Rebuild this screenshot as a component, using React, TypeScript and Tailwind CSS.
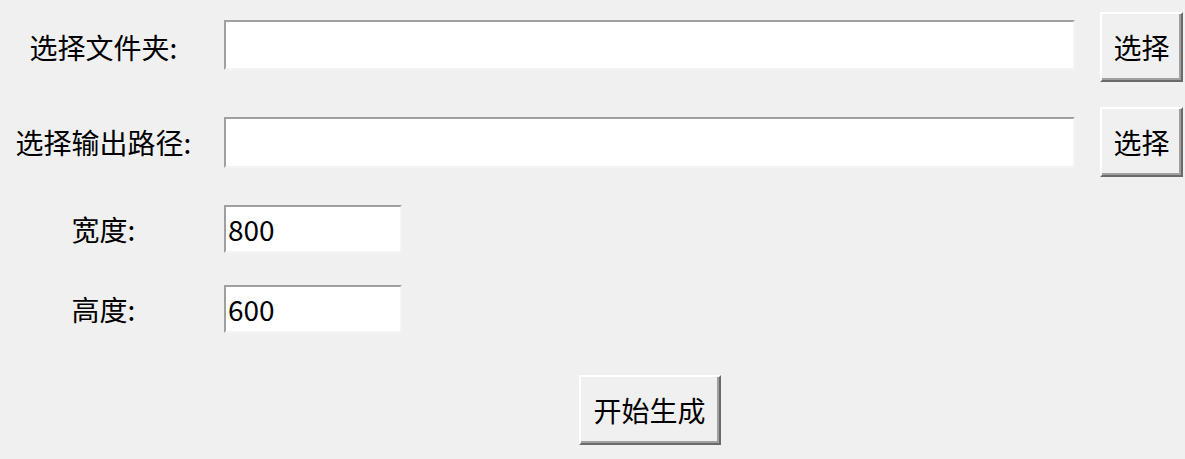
import { useState } from 'react'

const entryCls =
  'bg-white border-2 border-t-[#a0a0a0] border-l-[#a0a0a0] border-r-[#f4f4f4] border-b-[#f4f4f4] px-[2px] text-[28px] leading-none text-black outline-none'

const buttonCls =
  'bg-[#f0f0f0] border-2 border-t-white border-l-white border-r-[#6a6a6a] border-b-[#6a6a6a] shadow-[inset_-2px_-2px_0_#a0a0a0] text-[28px] leading-none text-black'

function Label({ text }: { text: string }) {
  return <div className="w-[207px] text-center text-[28px] leading-none text-black">{text}</div>
}

export default function App() {
  const [folder, setFolder] = useState('')
  const [output, setOutput] = useState('')
  const [width, setWidth] = useState('800')
  const [height, setHeight] = useState('600')

  return (
    <div className="w-[1185px] h-[459px] bg-[#f0f0f0] overflow-hidden font-['Noto_Sans_CJK_SC','Noto_Sans',sans-serif]">
      {/* folder */}
      <div className="flex items-center h-[94px]">
        <Label text="选择文件夹:" />
        <input value={folder} onChange={e => setFolder(e.target.value)} className={`${entryCls} ml-[17px] mb-[4px] w-[851px] h-[50px]`} />
        <button className={`${buttonCls} ml-[25px] w-[83px] h-[70px]`}>选择</button>
      </div>

      {/* output path */}
      <div className="flex items-center h-[96px]">
        <Label text="选择输出路径:" />
        <input value={output} onChange={e => setOutput(e.target.value)} className={`${entryCls} ml-[17px] w-[851px] h-[51px]`} />
        <button className={`${buttonCls} ml-[25px] w-[83px] h-[70px]`}>选择</button>
      </div>

      {/* size */}
      <div className="flex items-center h-[78px]">
        <Label text="宽度:" />
        <input value={width} onChange={e => setWidth(e.target.value)} className={`${entryCls} ml-[17px] w-[178px] h-[48px]`} />
      </div>
      <div className="flex items-center h-[82px]">
        <Label text="高度:" />
        <input value={height} onChange={e => setHeight(e.target.value)} className={`${entryCls} ml-[17px] w-[178px] h-[48px]`} />
      </div>

      <div className="ml-[224px] w-[851px] pt-[25px] flex justify-center">
        <button className={`${buttonCls} w-[142px] h-[70px]`}>开始生成</button>
      </div>
    </div>
  )
}
